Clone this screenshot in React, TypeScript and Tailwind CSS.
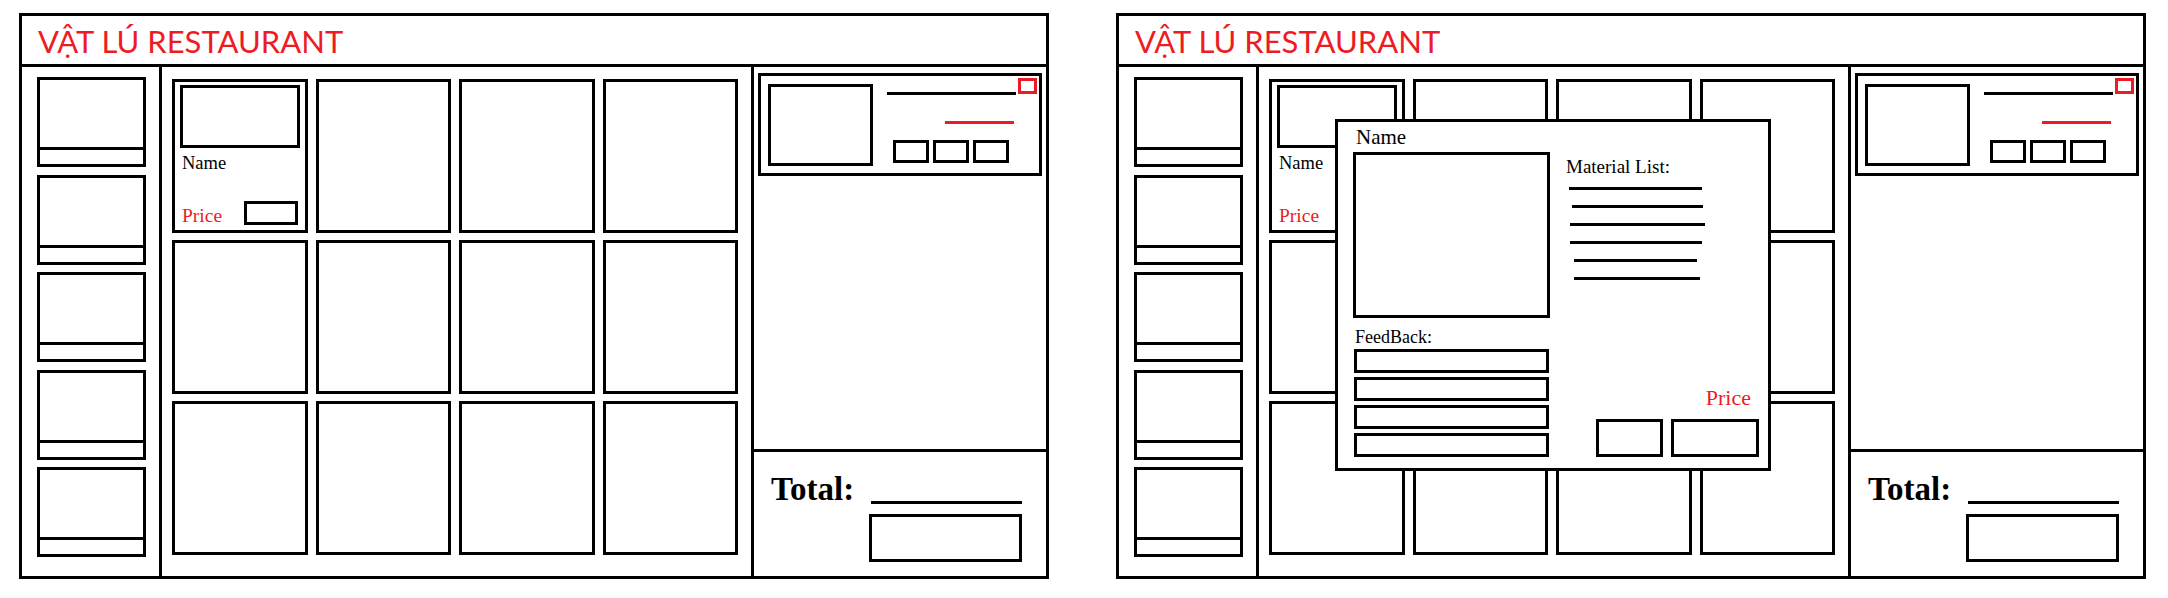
import React from 'react';

const serif = "font-['Liberation_Serif',serif]";

const SideItem = () => (
  <div className="w-[109px] h-[90px] border-[3px] border-black flex flex-col shrink-0">
    <div className="flex-1" />
    <div className="h-[17px] border-t-[3px] border-black" />
  </div>
);

const FoodCard = () => (
  <div className="h-[154px] border-[3px] border-black flex flex-col pb-[5px]">
    <div className="ml-[5px] mt-[3px] w-[120px] h-[63px] border-[3px] border-black" />
    <p className={`${serif} text-[18.5px] leading-none mt-[6px] pl-[7px] text-black`}>Name</p>
    <div className="mt-auto flex items-end justify-between pl-[7px] pr-[7px]">
      <span className={`${serif} text-[19.5px] leading-none text-[#ed1c24]`}>Price</span>
      <div className="w-[54px] h-[24px] border-[3px] border-black" />
    </div>
  </div>
);

const CartItem = () => (
  <div className="h-[103px] border-[3px] border-black flex pl-[7px]">
    <div className="mt-[8px] w-[105px] h-[82px] border-[3px] border-black" />
    <div className="ml-[14px] flex flex-col">
      <div className="flex items-start">
        <div className="mt-[16px] w-[129px] h-[3px] bg-black" />
        <div className="mt-[2px] ml-[2px] w-[19px] h-[16px] border-[3px] border-[#ed1c24]" />
      </div>
      <div className="mt-[26px] ml-[58px] w-[69px] h-[3px] bg-[#ed1c24]" />
      <div className="mt-[16px] ml-[6px] flex gap-[4px]">
        {[0, 1, 2].map((i) => (
          <div key={i} className="w-[36px] h-[23px] border-[3px] border-black" />
        ))}
      </div>
    </div>
  </div>
);

const materialLines = [
  { ml: 'ml-[3px]', w: 'w-[133px]' },
  { ml: 'ml-[6px]', w: 'w-[131px]' },
  { ml: 'ml-[4px]', w: 'w-[135px]' },
  { ml: 'ml-[4px]', w: 'w-[132px]' },
  { ml: 'ml-[8px]', w: 'w-[123px]' },
  { ml: 'ml-[8px]', w: 'w-[126px]' },
];

const DetailModal = () => (
  <div className="absolute left-[216px] top-[103px] w-[436px] h-[352px] border-[3px] border-black bg-white flex pl-[15px] pr-[9px] pb-[11px] z-10">
    {/* left: picture + feedback */}
    <div className="w-[197px] flex flex-col pt-[5px]">
      <p className={`${serif} text-[21px] leading-[21px] h-[21px] pl-[3px] text-black`}>Name</p>
      <div className="mt-[4px] h-[170px] border-[3px] border-black" />
      <p className={`${serif} text-[18px] leading-[18px] h-[18px] mt-[10px] pl-[2px] text-black`}>FeedBack:</p>
      <div className="mt-[3px] flex flex-col gap-[4px] w-[195px] ml-[1px]">
        {[0, 1, 2, 3].map((i) => (
          <div key={i} className="h-[24px] border-[3px] border-black" />
        ))}
      </div>
    </div>

    {/* right: materials, price, buttons */}
    <div className="flex-1 ml-[16px] flex flex-col pt-[35px]">
      <p className={`${serif} text-[19px] leading-[19px] h-[19px] text-black`}>Material List:</p>
      <div className="mt-[11px] flex flex-col gap-[15px]">
        {materialLines.map((l, i) => (
          <div key={i} className={`${l.ml} ${l.w} h-[3px] bg-black`} />
        ))}
      </div>
      <div className="mt-auto flex flex-col items-end">
        <span className={`${serif} text-[22px] leading-[22px] mr-[8px] text-[#ed1c24]`}>Price</span>
        <div className="mt-[10px] flex gap-[8px]">
          <div className="w-[67px] h-[38px] border-[3px] border-black" />
          <div className="w-[88px] h-[38px] border-[3px] border-black" />
        </div>
      </div>
    </div>
  </div>
);

const Wireframe = ({ withModal = false }: { withModal?: boolean }) => (
  <div className="relative w-[1030px] h-[566px] border-[3px] border-black flex flex-col shrink-0">
    {/* Header */}
    <div className="h-[51px] border-b-[3px] border-black pl-[16px] flex items-center">
      <h1 className="font-['Lato',sans-serif] text-[31px] leading-none text-[#ed1c24] mt-[2px]">VẬT LÚ RESTAURANT</h1>
    </div>

    <div className="flex-1 flex min-h-0">
      {/* Category sidebar */}
      <div className="w-[140px] border-r-[3px] border-black flex flex-col pl-[15px] pt-[10px] gap-[7.5px]">
        {[0, 1, 2, 3, 4].map((i) => (
          <SideItem key={i} />
        ))}
      </div>

      {/* Menu grid */}
      <div className="w-[589px] grid grid-cols-4 auto-rows-[154px] gap-x-[8px] gap-y-[7px] pl-[10px] pr-[13px] pt-[12px] content-start">
        <FoodCard />
        {Array.from({ length: 11 }).map((_, i) => (
          <div key={i} className="border-[3px] border-black" />
        ))}
      </div>

      {/* Cart */}
      <div className="flex-1 border-l-[3px] border-black flex flex-col">
        <div className="flex-1 px-[4px] pt-[6px]">
          <CartItem />
        </div>
        <div className="h-[127px] border-t-[3px] border-black flex pl-[17px]">
          <span className={`${serif} font-bold text-[33px] leading-none w-[98px] mt-[21px] text-black`}>Total:</span>
          <div className="flex flex-col">
            <div className="mt-[49px] ml-[2px] w-[151px] h-[3px] bg-black" />
            <div className="mt-[10px] w-[153px] h-[48px] border-[3px] border-black" />
          </div>
        </div>
      </div>
    </div>

    {withModal && <DetailModal />}
  </div>
);

export default function App() {
  return (
    <div className="w-[2168px] h-[598px] bg-white flex gap-[67px] pl-[19px] pt-[13px] overflow-hidden">
      <Wireframe />
      <Wireframe withModal />
    </div>
  );
}
